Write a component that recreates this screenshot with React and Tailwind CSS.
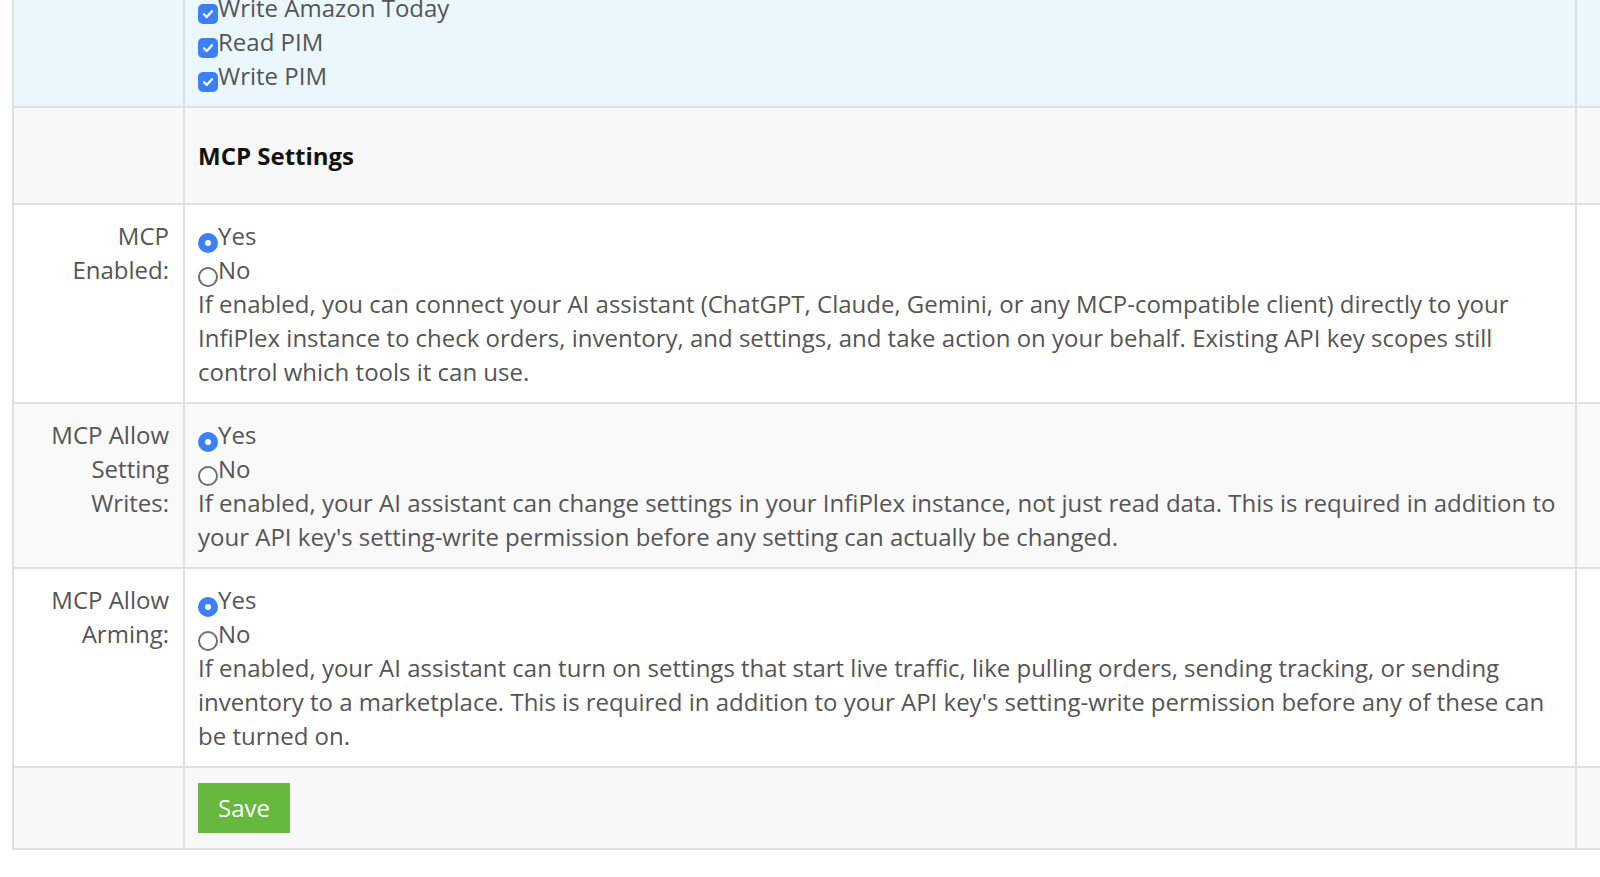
import React from 'react';

const Check = () => (
  <span className="mt-[13px] shrink-0 flex items-center justify-center w-[20px] h-[20px] rounded-[5px] bg-[#3b80f5]">
    <svg width="14" height="14" viewBox="0 0 14 14" fill="none">
      <path d="M3 7.2l2.7 2.9L11 4.2" stroke="white" strokeWidth="2.2" strokeLinecap="round" strokeLinejoin="round" />
    </svg>
  </span>
);

const Radio = ({ checked }) =>
  checked ? (
    <span className="mt-[14px] shrink-0 flex items-center justify-center w-[20px] h-[20px] rounded-full bg-[#3b80f5]">
      <span className="w-[6px] h-[6px] rounded-full bg-white" />
    </span>
  ) : (
    <span className="mt-[14px] shrink-0 block w-[20px] h-[20px] rounded-full border-2 border-[#6f6f6f] bg-white" />
  );

const Line = ({ children }) => <div className="flex h-[34px]">{children}</div>;

const YesNo = () => (
  <>
    <Line>
      <Radio checked />
      Yes
    </Line>
    <Line>
      <Radio />
      No
    </Line>
  </>
);

const rows = [
  {
    label: ['MCP', 'Enabled:'],
    bg: 'bg-white',
    help: 'If enabled, you can connect your AI assistant (ChatGPT, Claude, Gemini, or any MCP-compatible client) directly to your InfiPlex instance to check orders, inventory, and settings, and take action on your behalf. Existing API key scopes still control which tools it can use.',
  },
  {
    label: ['MCP Allow', 'Setting', 'Writes:'],
    bg: 'bg-[#f9f9f9]',
    help: "If enabled, your AI assistant can change settings in your InfiPlex instance, not just read data. This is required in addition to your API key's setting-write permission before any setting can actually be changed.",
  },
  {
    label: ['MCP Allow', 'Arming:'],
    bg: 'bg-white',
    help: "If enabled, your AI assistant can turn on settings that start live traffic, like pulling orders, sending tracking, or sending inventory to a marketplace. This is required in addition to your API key's setting-write permission before any of these can be turned on.",
  },
];

const border = 'border-2 border-[#e0e0e0]';

export default function App() {
  return (
    <div className="w-[1600px] h-[877px] overflow-hidden bg-white pl-[12px] font-['Open_Sans',sans-serif] text-[24px] leading-[34px] text-[#555]">
      <table className="mt-[-59px] w-[1650px] border-collapse table-fixed">
        <colgroup>
          <col className="w-[171px]" />
          <col className="w-[1392px]" />
          <col />
        </colgroup>
        <tbody>
          <tr className="bg-[#eaf7fd]">
            <td className={border} />
            <td className={`${border} align-top pl-[13px] pt-[14px] pb-[13px]`}>
              {['Read Amazon Today', 'Write Amazon Today', 'Read PIM', 'Write PIM'].map((t) => (
                <Line key={t}>
                  <Check />
                  {t}
                </Line>
              ))}
            </td>
            <td className={border} />
          </tr>
          <tr className="bg-[#f8f8f8] h-[97px]">
            <td className={border} />
            <td className={`${border} align-middle pl-[13px]`}>
              <h3 className="font-bold text-[24px] text-[#111]">MCP Settings</h3>
            </td>
            <td className={border} />
          </tr>
          {rows.map((r) => (
            <tr key={r.label.join(' ')} className={r.bg}>
              <td className={`${border} align-top text-right pr-[14px] pt-[14px] pb-[13px]`}>
                {r.label.map((l) => (
                  <div key={l}>{l}</div>
                ))}
              </td>
              <td className={`${border} align-top pl-[13px] pr-[14px] pt-[14px] pb-[13px]`}>
                <YesNo />
                <div>{r.help}</div>
              </td>
              <td className={border} />
            </tr>
          ))}
          <tr className="bg-[#f8f8f8]">
            <td className={border} />
            <td className={`${border} align-top pl-[13px] pt-[15px] pb-[15px]`}>
              <button className="block w-[92px] h-[50px] bg-[#67b83f] text-white text-[24px] leading-[50px]">
                Save
              </button>
            </td>
            <td className={border} />
          </tr>
        </tbody>
      </table>
    </div>
  );
}
